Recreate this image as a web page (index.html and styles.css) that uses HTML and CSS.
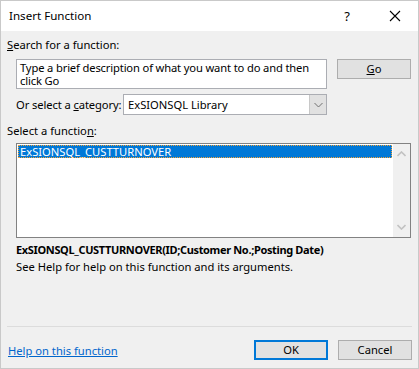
FILE: index.html
```html
<!DOCTYPE html>
<html lang="en">
<head>
  <meta charset="UTF-8">
  <title>Insert Function</title>
  <link rel="stylesheet" href="styles.css">
</head>
<body>
  <div class="dialog">
    <div class="titlebar">
      <span class="title">Insert Function</span>
      <span class="help-btn">?</span>
      <span class="close-btn">
        <svg width="12" height="12" viewBox="0 0 12 12"><path d="M1 1L11 11M11 1L1 11" stroke="#000" stroke-width="1.1"/></svg>
      </span>
    </div>

    <div class="content">
      <div class="label"><u>S</u>earch for a function:</div>
      <div class="search-row">
        <div class="search-box">Type a brief description of what you want to do and then click Go</div>
        <button class="btn"><u>G</u>o</button>
      </div>

      <div class="category-row">
        <span class="category-label">Or select a <u>c</u>ategory:</span>
        <div class="select">
          <span class="select-value">ExSIONSQL Library</span>
          <span class="select-arrow">
            <svg width="9" height="6" viewBox="0 0 9 6"><path d="M0.5 1L4.5 5L8.5 1" fill="none" stroke="#707070" stroke-width="1"/></svg>
          </span>
        </div>
      </div>

      <div class="label label-func">Select a functio<u>n</u>:</div>
      <div class="listbox">
        <div class="list-items">
          <div class="item selected">ExSIONSQL_CUSTTURNOVER</div>
        </div>
        <div class="scrollbar">
          <svg width="9" height="6" viewBox="0 0 9 6"><path d="M0.5 5L4.5 1L8.5 5" fill="none" stroke="#c2c2c2" stroke-width="1.6"/></svg>
          <svg width="9" height="6" viewBox="0 0 9 6"><path d="M0.5 1L4.5 5L8.5 1" fill="none" stroke="#c2c2c2" stroke-width="1.6"/></svg>
        </div>
      </div>

      <div class="signature">ExSIONSQL_CUSTTURNOVER(ID;Customer No.;Posting Date)</div>
      <div class="desc">See Help for help on this function and its arguments.</div>

      <div class="footer">
        <a class="help-link" href="#">Help on this function</a>
        <div class="buttons">
          <button class="btn btn-default">OK</button>
          <button class="btn">Cancel</button>
        </div>
      </div>
    </div>
  </div>
</body>
</html>
```

FILE: styles.css
```css
* {
  margin: 0; padding: 0; box-sizing: border-box;
  font-family: 'Noto Sans', sans-serif;
}
body {
  background: #f0f0f0;
  font-size: 11.2px;
  color: #000;
}
.dialog {
  width: 419px;
  height: 369px;
  border: 1px solid #c9c9c9;
  background: #f0f0f0;
  display: flex;
  flex-direction: column;
}
.titlebar {
  height: 30px;
  background: white;
  display: flex;
  align-items: center;
  padding-left: 8px;
  font-size: 11.6px;
}
.title {
  flex-grow: 1;
  line-height: 16px;
}
.help-btn {
  width: 14px;
  text-align: center;
  margin-right: 35px;
  font-size: 13px;
}
.close-btn {
  width: 12px;
  height: 12px;
  margin-right: 17px;
  display: flex;
}
.content {
  flex-grow: 1;
  display: flex;
  flex-direction: column;
  padding: 6px 6px 0 6px;
}
.label {
  line-height: 15px;
}
.search-row {
  display: flex;
  gap: 10px;
  margin: 7px 0 0 9px;
  align-items: flex-start;
}
.search-box {
  width: 311px;
  height: 30px;
  background: white;
  border: 1px solid #abadb3;
  padding: 1px 2px 1px 3px;
  line-height: 13px;
  letter-spacing: -0.15px;
}
.btn {
  width: 74px;
  height: 20px;
  background: #e1e1e1;
  border: 1px solid #adadad;
  font-size: 11.2px;
  line-height: 16px;
  color: #000;
}
.btn-default {
  border: 2px solid #0078d7;
}
.category-row {
  display: flex;
  align-items: center;
  margin: 5px 0 0 9px;
}
.category-label {
  width: 107px;
  flex-shrink: 0;
  white-space: nowrap;
  letter-spacing: -0.1px;
}
.select {
  width: 204px;
  height: 21px;
  border: 1px solid #abadb3;
  background: white;
  display: flex;
  align-items: center;
}
.select-value {
  flex-grow: 1;
  padding-left: 4px;
}
.select-arrow {
  width: 17px;
  height: 19px;
  background: #e1e1e1;
  border-left: 1px solid #c8c8c8;
  display: flex;
  align-items: center;
  justify-content: center;
}
.label-func {
  margin-top: 8px;
}
.listbox {
  margin: 5px 0 0 9px;
  width: 395px;
  height: 95px;
  border: 1px solid #828282;
  background: white;
  display: flex;
}
.list-items {
  flex-grow: 1;
  padding: 1px;
}
.item {
  height: 13px;
  line-height: 13px;
  padding-left: 2px;
}
.item.selected {
  background: #0078d7;
  color: white;
  outline: 1px dotted #f2a33a;
  outline-offset: -1px;
}
.scrollbar {
  width: 17px;
  background: #f0f0f0;
  display: flex;
  flex-direction: column;
  justify-content: space-between;
  align-items: center;
  padding: 7px 0 7px;
}
.signature {
  margin: 3px 0 0 9px;
  font-weight: bold;
  font-size: 11px;
  letter-spacing: -0.35px;
  line-height: 17px;
}
.desc {
  margin-left: 9px;
  line-height: 17px;
}
.footer {
  margin-top: auto;
  border-top: 1px solid #dcdcdc;
  display: flex;
  justify-content: space-between;
  align-items: center;
  padding: 13px 0 8px 0;
}
.help-link {
  color: #0066cc;
  text-decoration: underline;
  padding-left: 1px;
}
.buttons {
  display: flex;
  gap: 10px;
}
```
